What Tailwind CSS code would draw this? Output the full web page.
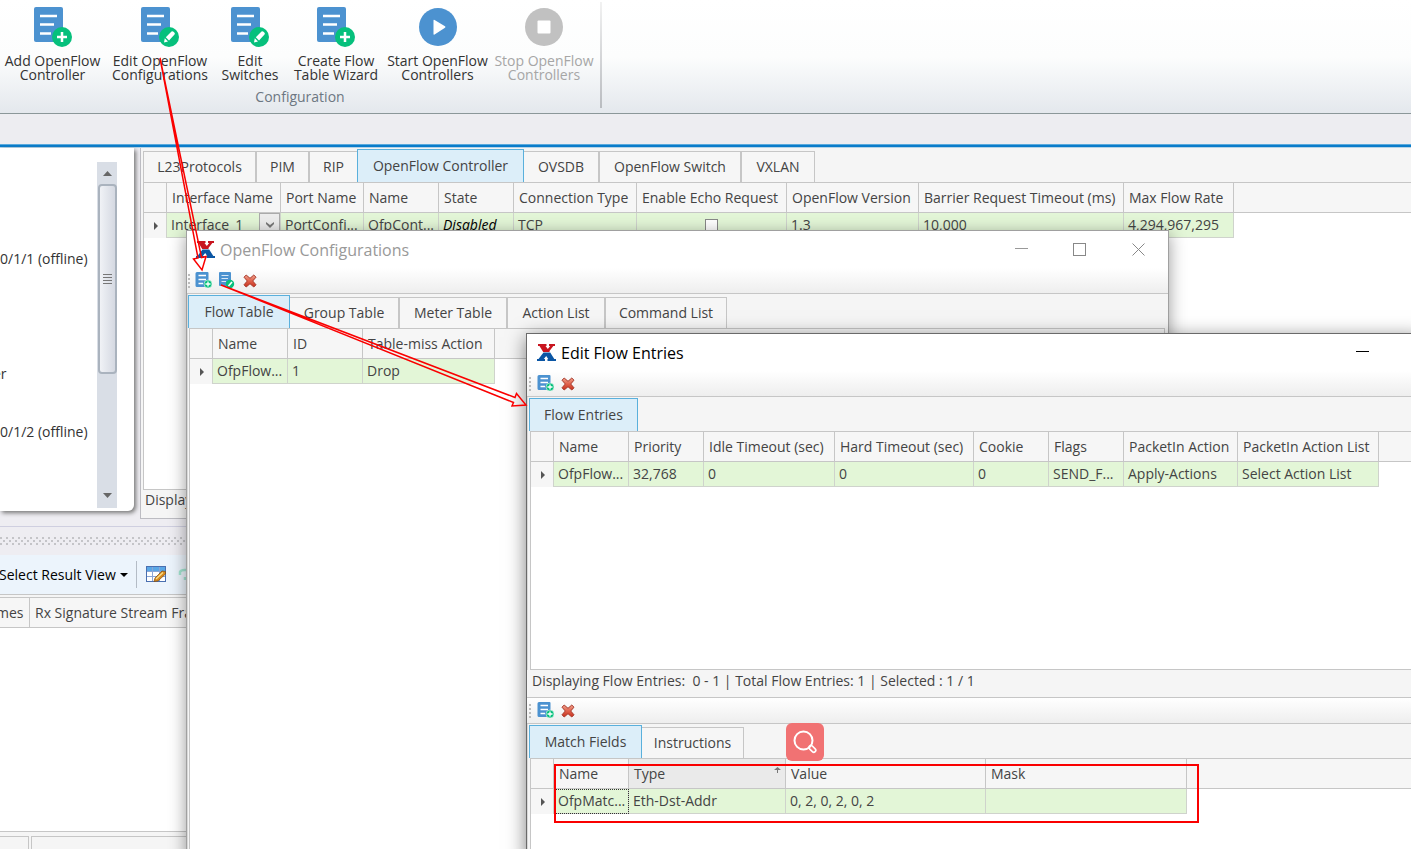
<!DOCTYPE html>
<html lang="en">
<head>
<meta charset="utf-8">
<title>OpenFlow Controller</title>
<script src="https://cdn.jsdelivr.net/npm/@tailwindcss/browser@4"></script>
</head>
<body class="relative h-screen overflow-hidden flex flex-col bg-[#eeedf2] font-['Open_Sans','Noto_Sans',sans-serif] text-sm text-[#444]">

<svg class="absolute size-0" aria-hidden="true">
  <defs>
    <linearGradient id="redx" x1="0" y1="0" x2="0" y2="1"><stop offset="0" stop-color="#f0a08c"/><stop offset=".5" stop-color="#e0624c"/><stop offset="1" stop-color="#c8301c"/></linearGradient>
    <symbol id="doc" viewBox="0 0 38 40">
      <rect x="0" y="0" width="29" height="35" rx="2" fill="#4c92d0"/>
      <path d="M6 9H23M6 17.500H20M6 26.500H17" stroke="#fff" stroke-width="2.500" fill="none"/>
      <circle cx="28" cy="30" r="10" fill="#06c07c"/>
    </symbol>
    <symbol id="doc-add" viewBox="0 0 38 40">
      <use href="#doc" width="38" height="40"/>
      <path d="M23 30H33M28 25V35" stroke="#fff" stroke-width="2.500"/>
    </symbol>
    <symbol id="doc-edit" viewBox="0 0 38 40">
      <use href="#doc" width="38" height="40"/>
      <path d="M23 35.500L23.800 31.200L27 34.600ZM24.800 30.200L30.500 24.500Q31.500 23.800 32.500 24.800L33.500 25.800Q34.300 26.800 33.500 27.600L28 33.400Z" fill="#fff"/>
    </symbol>
    <symbol id="sm-add" viewBox="0 0 17 17">
      <path d="M2 0H12.500a1 1 0 0 1 1 1V15H2a1.500 1.500 0 0 1-1.500-1.500V1.500A1.500 1.500 0 0 1 2 0Z" fill="#4c92d0"/>
      <path d="M3.500 3.500H11M3.500 7.500H11M3.500 11.500H8" stroke="#fff" stroke-width="1.300"/>
      <circle cx="13" cy="12" r="4" fill="#06c07c" stroke="#e8f8f0" stroke-width=".6"/>
      <path d="M10.500 12H15.500M13 9.500V14.500" stroke="#fff" stroke-width="1.300"/>
    </symbol>
    <symbol id="sm-edit" viewBox="0 0 17 17">
      <rect x="1" y="0" width="12" height="14" rx="1" fill="#4c92d0"/>
      <path d="M3.500 3.500H10.500M3.500 6.500H10M3.500 9.500H8" stroke="#d8e8f6" stroke-width="1.200"/>
      <circle cx="12" cy="12" r="4.200" fill="#06c07c"/>
      <path d="M10.500 14L14 10" stroke="#fff" stroke-width="1.600"/>
    </symbol>
    <symbol id="del" viewBox="0 0 14 14">
      <path d="M3.200 1L7 4.300L10.800 1L13 3.200L9.700 7L13 10.800L10.800 13L7 9.700L3.200 13L1 10.800L4.300 7L1 3.200Z" fill="url(#redx)" stroke="#a83a2c" stroke-width="1" stroke-linejoin="round"/>
    </symbol>
    <symbol id="logo" viewBox="0 0 19 17">
      <path d="M1 0H9.500V2H8.500L10.800 5L13.200 2H12V0H18V2H16.300L12.300 7.300L12.800 8H6.200L2.500 2H1Z" fill="#c8151f"/>
      <path d="M6.500 8.500H13.200L17.300 15H19V17H10.500V15H11.200L9.200 12L6.800 15H8V17H0V15H1.500Z" fill="#0b56a4"/>
    </symbol>
    <symbol id="grip" viewBox="0 0 2 14"><path d="M0 0h2v2H0zM0 4h2v2H0zM0 8h2v2H0zM0 12h2v2H0z" fill="#bbb"/></symbol>
    <symbol id="rowmark" viewBox="0 0 4 8"><path d="M0 0L4 4L0 8Z" fill="#555"/></symbol>
  </defs>
</svg>

<!-- Ribbon -->
<header class="shrink-0 h-[114px] flex border-b border-[#8b9799] bg-linear-to-b from-white via-[#fcfdfd] to-[#e4e8ed] text-sm leading-[14px] text-[#333]">
  <section class="w-[600px] pt-[7px]">
    <div class="flex h-[76px] items-start whitespace-nowrap">
      <button class="w-[105px] flex flex-col items-center gap-[7px]"><svg class="w-[38px] h-[40px]"><use href="#doc-add"/></svg><span>Add OpenFlow<br>Controller</span></button>
      <button class="w-[110px] flex flex-col items-center gap-[7px]"><svg class="w-[38px] h-[40px]"><use href="#doc-edit"/></svg><span>Edit OpenFlow<br>Configurations</span></button>
      <button class="w-[70px] flex flex-col items-center gap-[7px]"><svg class="w-[38px] h-[40px]"><use href="#doc-edit"/></svg><span>Edit<br>Switches</span></button>
      <button class="w-[102px] flex flex-col items-center gap-[7px]"><svg class="w-[38px] h-[40px]"><use href="#doc-add"/></svg><span>Create Flow<br>Table Wizard</span></button>
      <button class="w-[101px] flex flex-col items-center gap-[7px]"><svg class="w-[38px] h-[40px]" viewBox="0 0 38 40"><circle cx="19" cy="20" r="19" fill="#4c92d0"/><path d="M14.500 13.500Q14.500 12.300 15.600 13L26 19.300Q27 20 26 20.700L15.600 27.500Q14.500 28 14.500 27Z" fill="#fff"/></svg><span>Start OpenFlow<br>Controllers</span></button>
      <button disabled class="w-[112px] flex flex-col items-center gap-[7px] text-[#a6a6a6]"><svg class="w-[38px] h-[40px]" viewBox="0 0 38 40"><circle cx="19" cy="20" r="19" fill="#c1c1c1"/><rect x="12.500" y="13.500" width="13" height="13" rx="1" fill="#fff"/></svg><span>Stop OpenFlow<br>Controllers</span></button>
    </div>
    <div class="pt-[7px] text-center text-[#6d7782]">Configuration</div>
  </section>
  <div class="w-[2px] h-[106px] mt-[2px] bg-linear-to-b from-[#f2f2f2] to-[#b9bcc0]"></div>
</header>
<div class="shrink-0 h-[30px] bg-[#ededf1]"></div>
<div class="shrink-0 h-1 bg-[#0a7cca] border-t border-b border-t-[#59aadd] border-b-[#b5d3e6]"></div>

<!-- Upper panes -->
<div class="shrink-0 h-[371px] flex">
  <aside class="w-[134px] h-[363px] mr-[6px] flex bg-white rounded-br-md shadow-[2px_2px_4px_#777] text-sm text-[#333]">
    <div class="w-[97px] pt-[101px] whitespace-nowrap">
      <p class="h-[115px]">0/1/1 (offline)</p>
      <p class="h-[58px] -ml-[7px]">er</p>
      <p>0/1/2 (offline)</p>
    </div>
    <div class="w-[20px] h-[346px] mt-[14px] flex flex-col items-center bg-[#d9dee6]">
      <button aria-label="Scroll up" class="h-[22px] flex items-center"><svg class="w-[9px] h-[5px]" viewBox="0 0 9 5"><path d="M0 5L4.500 0L9 5Z" fill="#666"/></svg></button>
      <div class="w-[19px] h-[190px] flex items-center justify-center rounded-sm border-2 border-[#aab3be] bg-linear-to-r from-[#f0f2f6] to-[#d5d9e2]"><svg class="w-[9px] h-[10px]" viewBox="0 0 9 10"><path d="M0 .5H9M0 3.500H9M0 6.500H9M0 9.500H9" stroke="#777"/></svg></div>
      <button aria-label="Scroll down" class="mt-auto h-[26px] flex items-center"><svg class="w-[9px] h-[5px]" viewBox="0 0 9 5"><path d="M0 0L4.500 5L9 0Z" fill="#666"/></svg></button>
    </div>
  </aside>
  <main class="flex-1 min-w-0 flex flex-col border-l border-b border-[#bcbcc2] bg-[#f5f5f5] pl-[2px] pt-px">
    <nav class="h-[33px] flex items-end">
      <button class="w-[113px] h-[31px] border border-b-0 border-[#c6c6c6] bg-[#f6f6f6]">L23Protocols</button>
      <button class="w-[53px] h-[31px] border border-b-0 border-[#c6c6c6] bg-[#f6f6f6]">PIM</button>
      <button class="w-[48px] h-[31px] border border-b-0 border-r-0 border-[#c6c6c6] bg-[#f6f6f6]">RIP</button>
      <button class="w-[167px] h-[33px] border border-b-0 border-[#5ab0dc] bg-[#dceef9]">OpenFlow Controller</button>
      <button class="w-[75px] h-[31px] border border-b-0 border-l-0 border-[#c6c6c6] bg-[#f6f6f6]">OVSDB</button>
      <button class="w-[142px] h-[31px] border border-b-0 border-[#c6c6c6] bg-[#f6f6f6]">OpenFlow Switch</button>
      <button class="w-[74px] h-[31px] border border-b-0 border-[#c6c6c6] bg-[#f6f6f6]">VXLAN</button>
    </nav>
    <div class="flex-1 border border-r-0 border-[#c6c6c6] bg-white">
      <table class="w-full table-fixed border-separate border-spacing-0 text-left whitespace-nowrap">
        <colgroup><col class="w-[23px]"><col class="w-[114px]"><col class="w-[83px]"><col class="w-[75px]"><col class="w-[75px]"><col class="w-[123px]"><col class="w-[150px]"><col class="w-[132px]"><col class="w-[205px]"><col class="w-[110px]"><col></colgroup>
        <thead><tr class="h-[30px] bg-[#f6f6f6] *:border-b *:border-r *:border-[#c6c6c6] *:font-normal *:pl-[5px] *:py-0">
          <th></th><th>Interface Name</th><th>Port Name</th><th>Name</th><th>State</th><th>Connection Type</th><th>Enable Echo Request</th><th>OpenFlow Version</th><th>Barrier Request Timeout (ms)</th><th>Max Flow Rate</th><th class="border-r-0!"></th></tr></thead>
        <tbody><tr class="h-[25px] *:py-0 *:pl-1 *:border-r *:border-b *:border-[#cfd3cc] *:bg-[#e3f6d7]">
          <td class="bg-[#f6f6f6]! border-b-0!"><svg class="w-1 h-2 ml-[6px]"><use href="#rowmark"/></svg></td>
          <td><div class="flex h-6 items-center justify-between"><span>Interface_1</span><button aria-label="Choose interface" class="w-[21px] h-6 border border-[#aaa] bg-[#ececec] flex items-center justify-center"><svg class="w-2 h-[6px]" viewBox="0 0 8 6"><path d="M0 0L4 3L8 0V2L4 6L0 2Z" fill="#777"/></svg></button></div></td>
          <td>PortConfi...</td><td>OfpCont...</td><td class="italic text-black">Disabled</td><td>TCP</td>
          <td class="pl-0!"><input type="checkbox" aria-label="Enable Echo Request" class="block mx-auto size-[13px] appearance-none border border-[#888] bg-white"></td>
          <td>1.3</td><td>10,000</td><td>4,294,967,295</td><td class="bg-white! border-0!"></td></tr></tbody>
      </table>
    </div>
    <div class="h-[28px] pl-[2px]">Displaying</div>
  </main>
</div>

<!-- Splitter -->
<div class="shrink-0 h-[8px] border-b border-[#cfcfe0]"></div>
<div class="shrink-0 h-[28px] flex items-center">
  <svg class="w-full h-2"><defs><pattern id="dots" width="6" height="6" patternUnits="userSpaceOnUse"><path d="M0 0h2v2H0zM3 3h2v2H3z" fill="#c4c4c8"/></pattern></defs><rect width="100%" height="8" fill="url(#dots)"/></svg>
</div>

<!-- Result pane -->
<section class="flex-1 min-h-0 flex flex-col bg-[#f5f5f5]">
  <div class="h-[40px] flex items-center border-b border-[#c6c6c6] bg-[#ecf4fc] text-black">
    <button class="flex items-center gap-[4px] -ml-px whitespace-nowrap">Select Result View<svg class="w-2 h-1" viewBox="0 0 8 4"><path d="M0 0H8L4 4Z"/></svg></button>
    <span class="w-px h-[27px] ml-2 bg-[#b4bcc6]"></span>
    <button aria-label="Edit view" class="ml-[9px]"><svg class="w-[20px] h-[17px]" viewBox="0 0 20 17"><rect x=".5" y=".5" width="19" height="15" fill="#fff" stroke="#4a6fb0"/><rect x="1" y="1" width="18" height="4" fill="#5aa7e6"/><path d="M1 5.500H19M1 10.500H19M6.500 1V15M13.500 1V15" stroke="#8aa6d6"/><path d="M8 15.500L9 12L16 5L19.500 5.500V8L12 15Z" fill="#d98a1c" stroke="#7a4a12" stroke-width=".7"/><path d="M10 13L17 6.500" stroke="#fbe08a" stroke-width="1.300"/></svg></button>
    <button aria-label="Refresh" class="ml-3"><svg class="w-4 h-4" viewBox="0 0 16 16"><path d="M2 8V5Q3 2.500 8 3M7 10V13" fill="none" stroke="#a4e6d2" stroke-width="2.500"/></svg></button>
  </div>
  <div class="mt-[2px] h-[31px] flex items-center border-y border-[#c6c6c6] bg-[#f6f6f6] whitespace-nowrap">
    <span class="w-[30px] h-full flex items-center border-r border-[#c6c6c6]"><span class="-ml-1">mes</span></span>
    <span class="pl-[5px]">Rx Signature Stream Frames</span>
  </div>
  <div class="flex-1 bg-white"></div>
  <div class="h-[18px] pt-1 flex gap-[2px] border-t border-[#c6c6c6]">
    <div class="w-[29px] border-t border-r border-[#c6c6c6]"></div>
    <div class="flex-1 border-t border-l border-[#c6c6c6]"></div>
  </div>
</section>

<!-- OpenFlow Configurations window -->
<section class="absolute left-[186px] top-[230px] right-[242px] bottom-[-12px] flex flex-col border border-[#a0a0a0] bg-[#f5f5f5] shadow-[0_4px_16px_rgba(0,0,0,0.4)]">
  <div class="h-[37px] shrink-0 flex items-center bg-white pl-[9px] text-[#999]">
    <svg class="w-[19px] h-[17px]"><use href="#logo"/></svg>
    <h2 class="ml-[5px] text-base">OpenFlow Configurations</h2>
    <button aria-label="Minimize" class="ml-auto mr-[45px]"><svg class="size-[13px]" viewBox="0 0 13 13"><path d="M0 5.500H13" stroke="#999"/></svg></button>
    <button aria-label="Maximize" class="mr-[46px]"><svg class="size-[13px]" viewBox="0 0 13 13"><rect x=".5" y=".5" width="12" height="12" fill="none" stroke="#888"/></svg></button>
    <button aria-label="Close" class="mr-[23px]"><svg class="size-[13px]" viewBox="0 0 13 13"><path d="M.5 .5L12.500 12.500M12.500 .5L.5 12.500" stroke="#888"/></svg></button>
  </div>
  <div class="h-[26px] shrink-0 flex items-center pl-px border-b border-[#c6c6c6] bg-linear-to-b from-white to-[#eee]">
    <svg class="w-[2px] h-[14px]"><use href="#grip"/></svg>
    <button aria-label="Add" class="ml-[5px]"><svg class="size-[17px]"><use href="#sm-add"/></svg></button>
    <button aria-label="Edit" class="ml-[6px]"><svg class="size-[17px]"><use href="#sm-edit"/></svg></button>
    <button aria-label="Delete" class="ml-[8px]"><svg class="size-[14px]"><use href="#del"/></svg></button>
  </div>
  <div class="flex-1 flex flex-col pr-[3px] border-l border-[#d8d8d8]">
    <nav class="h-[34px] shrink-0 flex items-end">
      <button class="w-[102px] h-[33px] border border-b-0 border-[#5ab0dc] bg-[#dceef9]">Flow Table</button>
      <button class="w-[109px] h-[31px] border border-b-0 border-l-0 border-[#c6c6c6] bg-[#f6f6f6]">Group Table</button>
      <button class="w-[108px] h-[31px] border border-b-0 border-[#c6c6c6] bg-[#f6f6f6]">Meter Table</button>
      <button class="w-[98px] h-[31px] border border-b-0 border-[#c6c6c6] bg-[#f6f6f6]">Action List</button>
      <button class="w-[122px] h-[31px] border border-b-0 border-[#c6c6c6] bg-[#f6f6f6]">Command List</button>
    </nav>
    <div class="ml-px flex-1 border border-[#c6c6c6] bg-white">
      <table class="w-full table-fixed border-separate border-spacing-0 text-left whitespace-nowrap">
        <colgroup><col class="w-[23px]"><col class="w-[75px]"><col class="w-[75px]"><col class="w-[132px]"><col></colgroup>
        <thead><tr class="h-[30px] bg-[#f6f6f6] *:border-b *:border-r *:border-[#c6c6c6] *:font-normal *:pl-[5px] *:py-0"><th></th><th>Name</th><th>ID</th><th>Table-miss Action</th><th class="border-r-0!"></th></tr></thead>
        <tbody><tr class="h-[25px] *:py-0 *:pl-1 *:border-r *:border-b *:border-[#cfd3cc] *:bg-[#e3f6d7]"><td class="bg-[#f6f6f6]! border-b-0!"><svg class="w-1 h-2 ml-[6px]"><use href="#rowmark"/></svg></td><td>OfpFlow...</td><td>1</td><td>Drop</td><td class="bg-white! border-0!"></td></tr></tbody>
      </table>
    </div>
  </div>
</section>

<!-- Edit Flow Entries window -->
<section class="absolute left-[526px] top-[333px] right-[-12px] bottom-[-12px] flex flex-col border border-[#6a6a6a] bg-[#f5f5f5] shadow-[0_4px_18px_rgba(0,0,0,0.5)]">
  <div class="h-[37px] shrink-0 flex items-center bg-white pl-[10px] text-black">
    <svg class="w-[19px] h-[17px]"><use href="#logo"/></svg>
    <h2 class="ml-[5px] text-base">Edit Flow Entries</h2>
    <button aria-label="Minimize" class="ml-auto mr-[53px]"><svg class="size-[13px]" viewBox="0 0 13 13"><path d="M0 5.500H13" stroke="#000"/></svg></button>
  </div>
  <div class="h-[26px] shrink-0 flex items-center pl-[2px] border-b border-[#c6c6c6] bg-linear-to-b from-white to-[#eee]">
    <svg class="w-[2px] h-[14px]"><use href="#grip"/></svg>
    <button aria-label="Add" class="ml-[6px]"><svg class="size-[17px]"><use href="#sm-add"/></svg></button>
    <button aria-label="Delete" class="ml-[7px]"><svg class="size-[14px]"><use href="#del"/></svg></button>
  </div>
  <div class="h-[273px] shrink-0 flex flex-col pl-px border-l border-[#d8d8d8]">
    <nav class="h-[34px] flex items-end">
      <button class="w-[109px] h-[33px] border border-b-0 border-[#5ab0dc] bg-[#dceef9]">Flow Entries</button>
    </nav>
    <div class="ml-px flex-1 border border-[#c6c6c6] bg-white">
      <table class="w-full table-fixed border-separate border-spacing-0 text-left whitespace-nowrap">
        <colgroup><col class="w-[23px]"><col class="w-[75px]"><col class="w-[75px]"><col class="w-[131px]"><col class="w-[139px]"><col class="w-[75px]"><col class="w-[75px]"><col class="w-[114px]"><col class="w-[141px]"><col></colgroup>
        <thead><tr class="h-[30px] bg-[#f6f6f6] *:border-b *:border-r *:border-[#c6c6c6] *:font-normal *:pl-[5px] *:py-0"><th></th><th>Name</th><th>Priority</th><th>Idle Timeout (sec)</th><th>Hard Timeout (sec)</th><th>Cookie</th><th>Flags</th><th>PacketIn Action</th><th>PacketIn Action List</th><th></th></tr></thead>
        <tbody><tr class="h-[25px] *:py-0 *:pl-1 *:border-r *:border-b *:border-[#cfd3cc] *:bg-[#e3f6d7]"><td class="bg-[#f6f6f6]! border-b-0!"><svg class="w-1 h-2 ml-[6px]"><use href="#rowmark"/></svg></td><td>OfpFlow...</td><td>32,768</td><td>0</td><td>0</td><td>0</td><td>SEND_F...</td><td>Apply-Actions</td><td>Select Action List</td><td class="bg-white! border-0!"></td></tr></tbody>
      </table>
    </div>
  </div>
  <div class="h-[28px] shrink-0 pt-px pl-[5px] border-b border-[#c6c6c6] whitespace-pre">Displaying Flow Entries:  0 - 1 | Total Flow Entries: 1 | Selected : 1 / 1</div>
  <div class="h-[26px] shrink-0 flex items-center pl-[2px] border-b border-[#c6c6c6] bg-linear-to-b from-white to-[#eee]">
    <svg class="w-[2px] h-[14px]"><use href="#grip"/></svg>
    <button aria-label="Add" class="ml-[6px]"><svg class="size-[17px]"><use href="#sm-add"/></svg></button>
    <button aria-label="Delete" class="ml-[7px]"><svg class="size-[14px]"><use href="#del"/></svg></button>
  </div>
  <div class="flex-1 flex flex-col pl-px border-l border-[#d8d8d8]">
    <nav class="h-[34px] shrink-0 flex items-end">
      <button class="w-[113px] h-[33px] border border-b-0 border-[#5ab0dc] bg-[#dceef9]">Match Fields</button>
      <button class="w-[102px] h-[31px] border border-b-0 border-l-0 border-[#c6c6c6] bg-[#f6f6f6]">Instructions</button>
    </nav>
    <div class="ml-px flex-1 border border-[#c6c6c6] bg-white">
      <table class="w-full table-fixed border-separate border-spacing-0 text-left whitespace-nowrap">
        <colgroup><col class="w-[23px]"><col class="w-[75px]"><col class="w-[157px]"><col class="w-[200px]"><col class="w-[201px]"><col></colgroup>
        <thead><tr class="h-[30px] bg-[#f6f6f6] *:border-b *:border-r *:border-[#c6c6c6] *:font-normal *:pl-[5px] *:py-0"><th></th><th>Name</th><th class="bg-[#eaeaea]"><div class="flex justify-between pr-1"><span>Type</span><svg class="w-[7px] h-[6px] mt-[3px]" viewBox="0 0 7 6"><path d="M0 3L3.500 0L7 3ZM3 2h1v4H3z" fill="#777"/></svg></div></th><th>Value</th><th>Mask</th><th></th></tr></thead>
        <tbody><tr class="h-[25px] *:py-0 *:pl-1 *:border-r *:border-b *:border-[#cfd3cc] *:bg-[#e3f6d7]"><td class="bg-[#f6f6f6]! border-b-0!"><svg class="w-1 h-2 ml-[6px]"><use href="#rowmark"/></svg></td><td class="outline outline-dotted outline-[#333] -outline-offset-1">OfpMatc...</td><td>Eth-Dst-Addr</td><td>0, 2, 0, 2, 0, 2</td><td></td><td class="bg-white! border-0!"></td></tr></tbody>
      </table>
    </div>
  </div>
</section>

<!-- Floating search button and annotations -->
<button aria-label="Search" class="absolute left-[786px] top-[723px] size-[38px] rounded-md bg-[#f17273]"><svg class="size-[38px]" viewBox="0 0 38 38"><circle cx="17.500" cy="17.500" r="9" fill="none" stroke="#fff" stroke-width="2"/><rect x="22.500" y="23.500" width="8" height="4" rx="2" transform="rotate(45 26 25.500)" fill="none" stroke="#fff" stroke-width="1.600"/></svg></button>
<div class="absolute left-[554px] top-[764px] w-[645px] h-[59px] border-2 border-[#fa0000] pointer-events-none"></div>
<svg class="absolute left-0 top-0 w-[1411px] h-[849px] pointer-events-none" viewBox="0 0 1411 849" fill="none" stroke="#fa0000" stroke-width="1.500">
  <path d="M160 58L198 258L193.500 259L202 270L206 256.500L201.500 257.500Z"/>
  <path d="M221 285L515 397.500L516.500 393.500L526 405L512 406L513.500 402.500Z"/>
</svg>
</body>
</html>
